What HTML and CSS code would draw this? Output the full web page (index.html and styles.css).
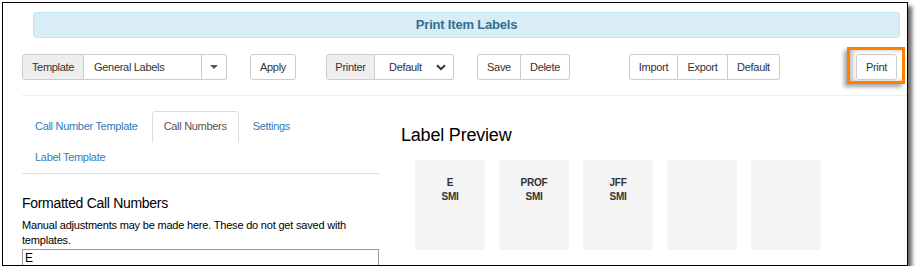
FILE: index.html
```html
<!DOCTYPE html>
<html>
    <head>
        <title>Print Item Labels</title>
        <link rel="stylesheet" href="styles.css">
    </head>
    <body>
        <div class="frame">
            <!-- page title banner -->
            <div class="banner">Print Item Labels</div>

            <!-- toolbar with template, printer and file actions -->
            <div class="toolbar">
                <div class="group">
                    <span class="addon w-template">Template</span>
                    <span class="field">General Labels</span>
                    <span class="btn caret-btn"><span class="caret"></span></span>
                </div>
                <span class="btn apply">Apply</span>
                <div class="group printer">
                    <span class="addon w-printer">Printer</span>
                    <span class="field select">Default
                        <svg width="10" height="7" viewBox="0 0 10 7"><path d="M1 1.3 L5 5.2 L9 1.3" fill="none" stroke="#333" stroke-width="2"/></svg>
                    </span>
                </div>
                <div class="group save">
                    <span class="btn w-save">Save</span>
                    <span class="btn w-delete">Delete</span>
                </div>
                <div class="group import">
                    <span class="btn w-import">Import</span>
                    <span class="btn w-export">Export</span>
                    <span class="btn w-default">Default</span>
                </div>
                <div class="highlight">
                    <span class="btn w-print">Print</span>
                </div>
            </div>

            <div class="rule"></div>

            <div class="main">
                <div class="left">
                    <ul class="tabs">
                        <li><a>Call Number Template</a></li>
                        <li class="active"><a>Call Numbers</a></li>
                        <li><a>Settings</a></li>
                        <li class="second-row"><a>Label Template</a></li>
                    </ul>
                    <h4>Formatted Call Numbers</h4>
                    <p>Manual adjustments may be made here. These do not get saved with templates.</p>
                    <div class="textarea">E</div>
                </div>
                <div class="right">
                    <h3>Label Preview</h3>
                    <div class="labels">
                        <div class="label">E<br>SMI</div>
                        <div class="label">PROF<br>SMI</div>
                        <div class="label">JFF<br>SMI</div>
                        <div class="label"></div>
                        <div class="label"></div>
                    </div>
                </div>
            </div>
        </div>
    </body>
</html>
```

FILE: styles.css
```css
body {
    margin: 0;
    font-family: "Liberation Sans", Arial, sans-serif;
    font-size: 11px;
    letter-spacing: -0.3px;
    color: #333;
    background: #fff;
}

/* the screenshot frame with its drop shadow */
.frame {
    margin: 2px 0 0 2px;
    width: 904px;
    height: 262px;
    border: 1px solid #000;
    box-shadow: 4px 4px 4px rgba(0, 0, 0, 0.6);
    overflow: hidden;
    background: #fff;
}

.banner {
    margin: 9px 7px 0 30px;
    height: 24px;
    line-height: 24px;
    border: 1px solid #bce8f1;
    border-radius: 3px;
    background: #d9edf7;
    color: #31708f;
    font-weight: bold;
    font-size: 13px;
    letter-spacing: -0.2px;
    text-align: center;
}

/**Toolbar**/
.toolbar {
    display: flex;
    align-items: flex-start;
    margin: 16px 0 0 19px;
    height: 41px;
}

.group {
    display: flex;
}

.btn, .addon, .field {
    box-sizing: border-box;
    display: flex;
    align-items: center;
    justify-content: center;
    height: 26px;
    border: 1px solid #ccc;
    border-radius: 3px;
    background: #fff;
    color: #333;
}

.group > * {
    border-radius: 0;
}

.group > * + * {
    border-left: none;
}

.group > *:first-child {
    border-radius: 3px 0 0 3px;
}

.group > *:last-child {
    border-radius: 0 3px 3px 0;
}

.addon {
    background: #eee;
}

.w-template { width: 62px; }
.w-printer { width: 49px; }
.w-save { width: 44px; }
.w-delete { width: 49px; }
.w-import { width: 49px; }
.w-export { width: 50px; }
.w-default { width: 52px; }
.w-print { width: 41px; }

.field {
    width: 118px;
    padding-left: 10px;
    justify-content: flex-start;
}

.caret-btn {
    width: 25px;
}

.caret {
    width: 0;
    height: 0;
    border-left: 4px solid transparent;
    border-right: 4px solid transparent;
    border-top: 4px solid #555;
}

.select {
    width: 79px;
    padding: 0 7px 0 14px;
    justify-content: space-between;
}

.apply {
    width: 46px;
    margin-left: 23px;
}

.printer {
    margin-left: 30px;
}

.save {
    margin-left: 23px;
}

.import {
    margin-left: 59px;
}

/* orange box drawn round the Print button */
.highlight {
    margin: -7px 2px 0 auto;
    padding: 4px 5px 1px 6px;
    border: 3px solid #ff8000;
    box-shadow: -3px 3px 4px rgba(0, 0, 0, 0.35), inset 3px 0 4px rgba(0, 0, 0, 0.25);
}

.rule {
    margin-left: 19px;
    border-top: 1px solid #eee;
}

/**Main area**/
.main {
    display: flex;
    margin: 15px 0 0 19px;
}

.left {
    width: 357px;
}

.tabs {
    display: flex;
    flex-wrap: wrap;
    margin: 0;
    padding: 0;
    list-style: none;
    border-bottom: 1px solid #ddd;
}

.tabs li {
    margin-right: 2px;
}

.tabs a {
    display: block;
    padding: 8px 11px 9px;
    line-height: 13px;
    color: #337ab7;
    border: 1px solid transparent;
    border-radius: 4px 4px 0 0;
}

.tabs li:first-child a {
    padding-left: 12px;
}

.tabs .second-row a {
    padding: 7px 11px 8px 12px;
}

.tabs .active a {
    color: #555;
    border-color: #ddd #ddd transparent;
}

h4 {
    margin: 20px 0 0;
    font-size: 14px;
    letter-spacing: -0.3px;
    font-weight: normal;
    line-height: 18px;
    color: #000;
}

p {
    margin: 6px 0 0;
    font-size: 11px;
    letter-spacing: -0.2px;
    line-height: 15px;
    color: #000;
}

.textarea {
    margin-top: 1px;
    height: 20px;
    padding: 1px 2px;
    border: 1px solid #999;
    color: #000;
    font-size: 12px;
    letter-spacing: 0;
}

.right {
    margin-left: 22px;
    margin-top: 13px;
}

h3 {
    margin: 0;
    font-size: 18px;
    letter-spacing: -0.2px;
    font-weight: normal;
    line-height: 22px;
    color: #000;
}

.labels {
    display: flex;
    gap: 14px;
    margin: 14px 0 0 14px;
}

.label {
    width: 70px;
    height: 74px;
    padding-top: 16px;
    border-radius: 3px;
    background: #f4f4f4;
    font-size: 10px;
    letter-spacing: -0.2px;
    font-weight: bold;
    line-height: 14px;
    text-align: center;
    color: #333;
}
```
